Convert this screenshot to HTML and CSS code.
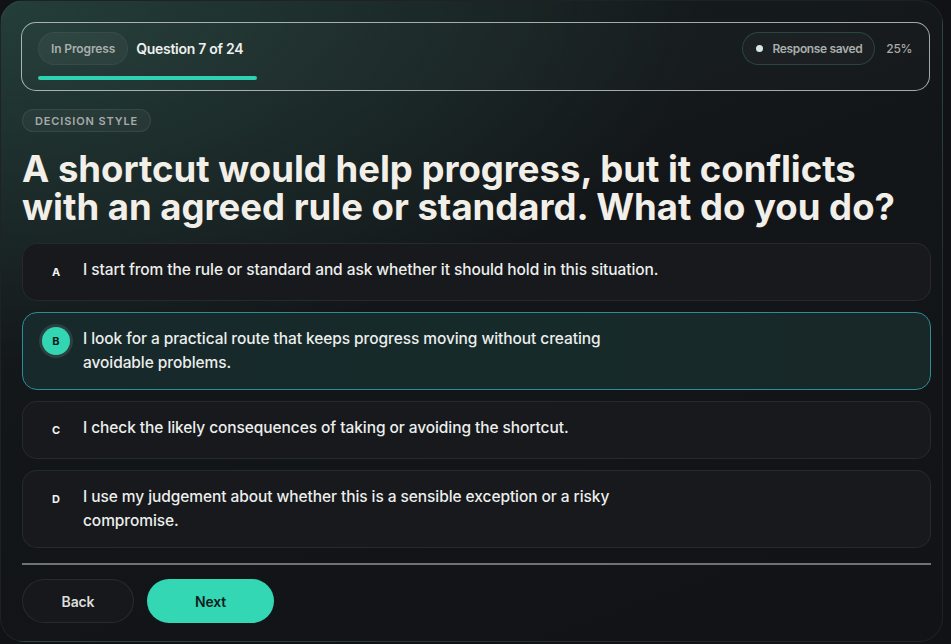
FILE: index.html
```html
<!DOCTYPE html>
<html lang="en">
<head>
<meta charset="utf-8">
<title>Question 7 of 24</title>
<link rel="stylesheet" href="styles.css">
</head>
<body>
<main class="card">
  <header class="status">
    <div class="status-row">
      <div class="status-left">
        <span class="pill">In Progress</span>
        <span class="qcount">Question 7 of 24</span>
      </div>
      <div class="status-right">
        <span class="pill saved"><span class="dot"></span>Response saved</span>
        <span class="pct">25%</span>
      </div>
    </div>
    <div class="track"><div class="fill" style="width:25%"></div></div>
  </header>

  <span class="chip">DECISION STYLE</span>

  <h1 class="question">A shortcut would help progress, but it conflicts with an agreed rule or standard. What do you do?</h1>

  <div class="options">
    <div class="option">
      <span class="badge">A</span>
      <span class="opt-text">I start from the rule or standard and ask whether it should hold in this situation.</span>
    </div>
    <div class="option selected">
      <span class="badge">B</span>
      <span class="opt-text">I look for a practical route that keeps progress moving without creating avoidable problems.</span>
    </div>
    <div class="option">
      <span class="badge">C</span>
      <span class="opt-text">I check the likely consequences of taking or avoiding the shortcut.</span>
    </div>
    <div class="option">
      <span class="badge">D</span>
      <span class="opt-text">I use my judgement about whether this is a sensible exception or a risky compromise.</span>
    </div>
  </div>

  <hr class="divider">

  <div class="actions">
    <button class="btn back">Back</button>
    <button class="btn next">Next</button>
  </div>
</main>
</body>
</html>
```

FILE: styles.css
```css
* { box-sizing: border-box; }

html, body {
  margin: 0;
  padding: 0;
  background: #101215;
}

body {
  width: 951px;
  height: 644px;
  overflow: hidden;
  font-family: Inter, "Noto Sans", sans-serif;
  color: #e9ebe9;
}

.card {
  width: 943px;
  height: 642px;
  border-radius: 24px;
  border: 1px solid rgba(255, 255, 255, 0.06);
  background:
    radial-gradient(ellipse 700px 360px at 0% 0%, rgba(40, 72, 66, 0.75), rgba(40, 72, 66, 0) 100%),
    linear-gradient(160deg, #17201f 0%, #131619 45%, #111316 100%);
  padding: 21px 12px 0 20px;
  display: flex;
  flex-direction: column;
  align-items: flex-start;
  overflow: hidden;
}

.card > * { flex-shrink: 0; }

.status {
  width: 909px;
  height: 69px;
  border: 1px solid rgba(220, 224, 222, 0.72);
  border-radius: 15px;
  background: rgba(255, 255, 255, 0.015);
  padding: 9px 16px 0 16px;
  display: flex;
  flex-direction: column;
}

.status-row {
  display: flex;
  justify-content: space-between;
  align-items: center;
}

.status-left, .status-right {
  display: flex;
  align-items: center;
}

.status-left { gap: 8px; }
.status-right { gap: 11px; }

.pill {
  display: inline-flex;
  align-items: center;
  height: 33px;
  padding: 0 12px;
  border-radius: 17px;
  background: rgba(255, 255, 255, 0.045);
  border: 1px solid rgba(255, 255, 255, 0.05);
  font-size: 12px;
  font-weight: 600;
  color: #a9aeac;
  letter-spacing: -0.01em;
}

.pill.saved {
  padding: 0 12px 0 13px;
  gap: 9px;
  letter-spacing: -0.03em;
  border-color: rgba(70, 140, 125, 0.35);
  background: rgba(255, 255, 255, 0.025);
}

.dot {
  width: 7px;
  height: 7px;
  border-radius: 50%;
  background: #d6e8e3;
}

.qcount {
  font-size: 14px;
  font-weight: 600;
  color: #eef0ee;
  letter-spacing: -0.02em;
}

.pct {
  font-size: 12px;
  font-weight: 500;
  color: #a6aaa9;
  letter-spacing: -0.03em;
  margin-right: 1px;
}

.track {
  margin-top: 11px;
  height: 4px;
  width: 100%;
}

.fill {
  height: 4px;
  border-radius: 2px;
  background: #2fd1b0;
}

.chip {
  margin-top: 18px;
  margin-left: 1px;
  display: inline-flex;
  align-items: center;
  height: 23px;
  padding: 0 12px;
  border-radius: 12px;
  background: rgba(255, 255, 255, 0.045);
  border: 1px solid rgba(255, 255, 255, 0.07);
  font-size: 11px;
  font-weight: 600;
  letter-spacing: 0.08em;
  color: #a6abaa;
}

.question {
  margin: 18px 0 0 1px;
  width: 905px;
  font-size: 36.5px;
  line-height: 38px;
  font-weight: 700;
  letter-spacing: 0;
  color: #f2efe9;
}

.options {
  margin-top: 17px;
  margin-left: 1px;
  width: 909px;
  display: flex;
  flex-direction: column;
  gap: 11px;
}

.option {
  display: flex;
  align-items: flex-start;
  gap: 13px;
  padding: 14px 19px;
  border-radius: 15px;
  background: #17191c;
  border: 1px solid rgba(255, 255, 255, 0.07);
  min-height: 58px;
}

.badge {
  flex: 0 0 28px;
  width: 28px;
  height: 28px;
  border-radius: 50%;
  display: flex;
  align-items: center;
  justify-content: center;
  font-size: 11px;
  font-weight: 700;
  color: #f2f2f0;
}

.opt-text {
  max-width: 590px;
  font-size: 15.5px;
  line-height: 24px;
  font-weight: 500;
  letter-spacing: -0.005em;
  color: #eceeec;
}

.option.selected {
  background: linear-gradient(90deg, #17292a 0%, #172a2a 60%, #182728 100%);
  border-color: #2b8f98;
}

.option.selected .badge {
  background: #33d6b3;
  color: #0f1d1a;
  box-shadow: 0 0 0 3px rgba(120, 140, 138, 0.22);
}

.divider {
  margin: 15px 0 0 1px;
  width: 909px;
  height: 2px;
  border: 0;
  background: #707375;
}

.actions {
  margin-top: 14px;
  margin-left: 1px;
  display: flex;
  gap: 13px;
}

.btn {
  height: 44px;
  border-radius: 22px;
  font-family: Inter, "Noto Sans", sans-serif;
  font-size: 14px;
  font-weight: 600;
  letter-spacing: -0.01em;
  cursor: pointer;
}

.btn.back {
  width: 112px;
  background: #16181b;
  border: 1px solid rgba(255, 255, 255, 0.08);
  color: #dcdedc;
}

.btn.next {
  width: 127px;
  background: #33d7b4;
  border: 0;
  color: #12201d;
}
```
